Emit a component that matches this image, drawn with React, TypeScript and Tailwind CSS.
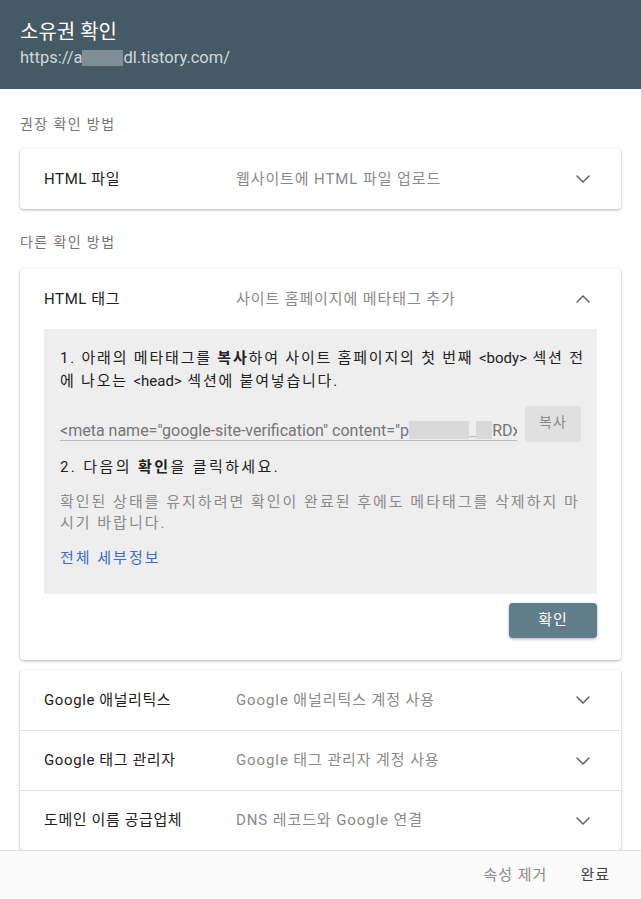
import { ChevronDown, ChevronUp } from "lucide-react";

const font = { fontFamily: 'Roboto, "Noto Sans CJK KR", sans-serif' };

function Row({
  label,
  desc,
  open,
  border,
}: {
  label: string;
  desc: string;
  open?: boolean;
  border?: boolean;
}) {
  return (
    <div
      className={`flex h-[60px] items-center pl-6 pr-[26px] ${
        border ? "border-t border-[#e0e0e0]" : ""
      }`}
    >
      <div className="w-[192px] text-[15px] tracking-[0.6px] text-[#212121]">{label}</div>
      <div className="flex-1 text-[15px] tracking-[0.9px] text-[#8a8a8a]">{desc}</div>
      {open ? (
        <ChevronUp className="h-6 w-6 text-[#616161]" strokeWidth={1.5} />
      ) : (
        <ChevronDown className="h-6 w-6 text-[#616161]" strokeWidth={1.5} />
      )}
    </div>
  );
}

export default function App() {
  return (
    <div className="flex h-[899px] w-[641px] flex-col bg-white" style={font}>
      {/* Header */}
      <div className="flex h-[89px] shrink-0 flex-col bg-[#455a64] px-5 pt-[19px]">
        <h1 className="text-[20px] leading-[26px] text-white">소유권 확인</h1>
        <div className="text-[16.5px] leading-[25px] text-[#cfd8dc]">
          https://a
          <span className="inline-block h-4 w-[41px] translate-y-[3px] bg-[#7f8e96]" />
          dl.tistory.com/
        </div>
      </div>

      {/* Content */}
      <div className="flex-1 overflow-hidden px-5">
        <div className="pb-[15px] pt-[25px] text-[14px] leading-5 tracking-[1.4px] text-[#757575]">
          권장 확인 방법
        </div>
        <div className="rounded-sm bg-white shadow-[0_1px_3px_rgba(0,0,0,0.3)]">
          <Row label="HTML 파일" desc="웹사이트에 HTML 파일 업로드" />
        </div>

        <div className="pb-[17px] pt-[23px] text-[14px] leading-5 tracking-[1.4px] text-[#757575]">
          다른 확인 방법
        </div>
        <div className="rounded-sm bg-white pb-[22px] shadow-[0_1px_3px_rgba(0,0,0,0.3)]">
          <Row label="HTML 태그" desc="사이트 홈페이지에 메타태그 추가" open />
          <div className="mx-6 bg-[#eeeeee] pb-[25px] pl-4 pr-1 pt-[18px]">
            <p className="text-[15px] leading-[23px] tracking-[1.8px] text-[#212121]">
              1. 아래의 메타태그를 <b className="font-bold">복사</b>하여 사이트 홈페이지의 첫 번째{" "}
              <span className="tracking-normal">&lt;body&gt;</span> 섹션 전에 나오는{" "}
              <span className="tracking-normal">&lt;head&gt;</span> 섹션에 붙여넣습니다.
            </p>
            <div className="mt-[13px] flex h-9 items-start gap-2 pr-3">
              <div className="h-[35px] flex-1 overflow-hidden whitespace-nowrap border-b border-[#bdbdbd] pt-[12px] text-[16px] leading-[20px] text-[#757575]">
                &lt;meta name="google-site-verification" content="p
                <span className="inline-block h-[18px] w-[60px] translate-y-[3px] bg-[#d9d9d9]" />
                <span className="text-[#bdbdbd]">_</span>
                <span className="inline-block h-[18px] w-[16px] translate-y-[3px] bg-[#d9d9d9]" />
                RDxxxxxxxx" /&gt;
              </div>
              <button className="h-9 w-[56px] rounded-sm bg-[#e0e0e0] pb-1 text-[14px] leading-none tracking-[1px] text-[#8a8a8a]">
                복사
              </button>
            </div>
            <p className="mt-[14px] text-[15px] leading-[23px] tracking-[2.4px] text-[#212121]">
              2. 다음의 <b className="font-bold">확인</b>을 클릭하세요.
            </p>
            <p className="mt-[13px] pr-1 text-[15px] leading-[21px] tracking-[2px] text-[#8a8a8a]">
              확인된 상태를 유지하려면 확인이 완료된 후에도 메타태그를 삭제하지 마시기 바랍니다.
            </p>
            <a className="mt-[14px] block text-[15px] leading-[21px] tracking-[2px] text-[#3b6bd1]">
              전체 세부정보
            </a>
          </div>
          <div className="mt-[9px] flex justify-end px-6">
            <button className="h-[35px] w-[88px] rounded-sm bg-[#607d8b] text-[15px] tracking-[1px] text-white shadow-[0_1px_3px_rgba(0,0,0,0.35)]">
              확인
            </button>
          </div>
        </div>

        <div className="mt-[10px] rounded-sm bg-white shadow-[0_1px_3px_rgba(0,0,0,0.3)]">
          <Row label="Google 애널리틱스" desc="Google 애널리틱스 계정 사용" />
          <Row label="Google 태그 관리자" desc="Google 태그 관리자 계정 사용" border />
          <Row label="도메인 이름 공급업체" desc="DNS 레코드와 Google 연결" border />
        </div>
      </div>

      {/* Footer */}
      <div className="flex h-[49px] shrink-0 items-center justify-end gap-[33px] border-t border-[#e0e0e0] bg-[#fafafa] pr-[31px]">
        <button className="text-[15px] tracking-[1px] text-[#8a8a8a]">속성 제거</button>
        <button className="text-[15px] tracking-[1px] text-[#424242]">완료</button>
      </div>
    </div>
  );
}
